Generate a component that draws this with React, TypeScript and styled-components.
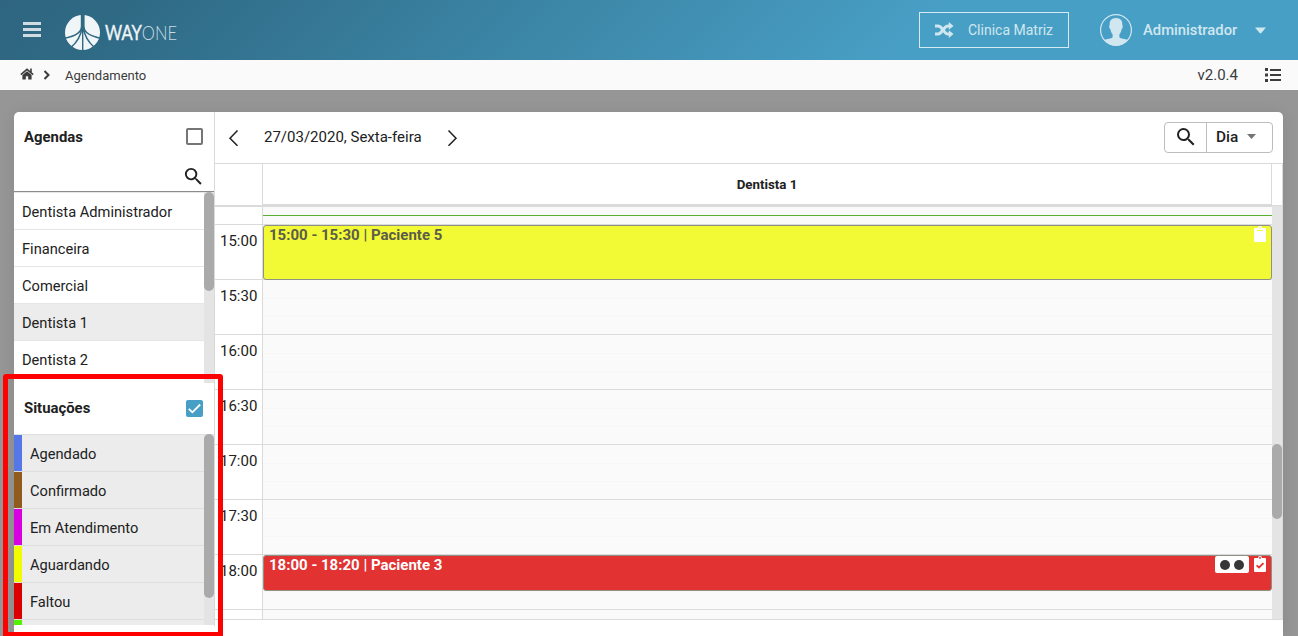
import React from "react";
import styled, { createGlobalStyle } from "styled-components";
import { MdSearch } from "react-icons/md";

const GlobalStyle = createGlobalStyle`
  *, *::before, *::after { box-sizing: border-box; }
  body {
    margin: 0;
    height: 636px;
    overflow: hidden;
    background: #969696;
    color: #212121;
    font: 15px/20px Roboto, sans-serif;
  }
  svg { display: block; flex: none; }
`;

const Page = styled.div`
  position: relative;
  height: 636px;
  overflow: hidden;
  display: flex;
  flex-direction: column;
`;

const TopBar = styled.header`
  flex: none;
  height: 60px;
  display: flex;
  align-items: center;
  padding: 0 32px 0 23px;
  color: #d0e7f0;
  background: linear-gradient(135deg, #2f6580 0%, #2f6a85 10%, #489fc5 70%, #489fc5 100%);
`;

const Menu = styled.button`
  width: 18px;
  height: 15px;
  margin-bottom: 1px;
  padding: 0;
  border: 0;
  background: none;
  display: flex;
  flex-direction: column;
  justify-content: space-between;
`;

const MenuLine = styled.span`
  height: 3px;
  background: #cfdde3;
`;

const Logo = styled.div`
  display: flex;
  align-items: center;
  margin-left: 24px;
  padding-top: 5px;
  flex: 1;
`;

const ClinicButton = styled.button`
  width: 150px;
  height: 36px;
  padding: 0 15px;
  display: flex;
  align-items: center;
  gap: 14px;
  border: 1px solid #d5eaf2;
  background: none;
  color: inherit;
  font: 14px/20px Roboto, sans-serif;
  white-space: nowrap;
`;

const User = styled.div`
  display: flex;
  align-items: center;
  margin-left: 31px;
  font-weight: 500;
  font-size: 14.8px;
`;

const UserName = styled.span`
  width: 112px;
  margin-left: 11px;
`;

const Crumbs = styled.nav`
  flex: none;
  height: 30px;
  display: flex;
  align-items: center;
  padding: 0 17px 0 20px;
  background: #fafafa;
  color: #3c3c3c;
  font-size: 13px;
`;

const CrumbText = styled.span`
  flex: 1;
  margin-left: 14px;
  padding-top: 2px;
`;

const Version = styled.span`
  margin-right: 27px;
  font-size: 15px;
`;

const Card = styled.main`
  flex: 1;
  min-height: 0;
  display: flex;
  margin: 22px 15px 0 14px;
  background: #fff;
  border-radius: 5px 5px 0 0;
  box-shadow: 0 2px 16px rgba(0, 0, 0, 0.09);
`;

const Sidebar = styled.aside`
  width: 201px;
  height: 514px;
  flex: none;
  border-right: 1px solid #dadada;
  display: flex;
  flex-direction: column;
`;

const GroupHeader = styled.div<{ $height: number }>`
  flex: none;
  height: ${(p) => p.$height}px;
  display: flex;
  align-items: center;
  justify-content: space-between;
  padding: 0 11.5px 1px 10px;
  font-weight: 700;
  font-size: 14.9px;
`;

const Checkbox = styled.span<{ $checked?: boolean }>`
  width: 17px;
  height: 17px;
  border: ${(p) => (p.$checked ? "0" : "2px solid #757575")};
  border-radius: 2px;
  background: ${(p) => (p.$checked ? "#479fc5" : "#fff")};
  color: #fff;
`;

const SearchRow = styled.div`
  flex: none;
  height: 30px;
  display: flex;
  justify-content: flex-end;
  padding: 3px 9px 0 0;
  border-bottom: 1px solid #8c8c8c;
`;

const ScrollList = styled.div<{ $height: number }>`
  flex: none;
  height: ${(p) => p.$height}px;
  display: flex;
  overflow: hidden;
`;

const Rows = styled.div`
  flex: 1;
`;

const Row = styled.div<{ $selected?: boolean; $color?: string }>`
  height: 37px;
  display: flex;
  align-items: center;
  padding: 2px 0 0 8px;
  border-top: 1px solid ${(p) => (p.$color ? "#dedede" : "#e6e6e6")};
  background: ${(p) =>
    p.$color
      ? `linear-gradient(to right, ${p.$color} 8px, #ececec 8px)`
      : p.$selected
        ? "#ececec"
        : "#fff"};
  text-indent: ${(p) => (p.$color ? "8px" : "0")};
  font-size: 14.65px;
`;

const Track = styled.div<{ $offset?: number }>`
  width: 10px;
  flex: none;
  padding-top: ${(p) => p.$offset ?? 0}px;
  background: #e4e4e4;
`;

const Thumb = styled.div<{ $height: number }>`
  height: ${(p) => p.$height}px;
  border-radius: 5px;
  background: #aaa;
`;

const Calendar = styled.section`
  flex: 1;
  min-width: 0;
  height: 508px;
  display: flex;
  flex-direction: column;
  border-bottom: 1px solid #dadada;
`;

const Toolbar = styled.div`
  flex: none;
  height: 52px;
  display: flex;
  align-items: center;
  padding: 0 10px 1px 13px;
  border-bottom: 1px solid #dadada;
`;

const DateLabel = styled.span`
  width: 158px;
  margin: 0 25px;
  padding-bottom: 1px;
  white-space: nowrap;
  font-size: 15px;
`;

const ButtonGroup = styled.div`
  margin-left: auto;
  width: 109px;
  height: 31px;
  display: flex;
  border: 1px solid #bdbdbd;
  border-radius: 4px;
`;

const GroupButton = styled.button<{ $width: number }>`
  width: ${(p) => p.$width}px;
  padding: 0 0 0 8.5px;
  display: flex;
  align-items: center;
  gap: 9px;
  border: 0;
  background: none;
  color: #212121;
  font: 500 15.4px/20px Roboto, sans-serif;

  & + & {
    padding: 0 0 1px 9px;
    border-left: 1px solid #bdbdbd;
  }
`;

const ColumnHeader = styled.div`
  flex: none;
  height: 42px;
  display: flex;
  border-right: 1px solid #dadada;
`;

const HeaderCell = styled.div<{ $width?: number }>`
  ${(p) => (p.$width ? `width: ${p.$width}px; flex: none;` : "flex: 1;")}
  border-right: 1px solid #dadada;
  border-bottom: 2px solid #dadada;
  display: flex;
  align-items: center;
  justify-content: center;
  padding-top: 1px;
  font-size: 13.3px;
  font-weight: 700;

  &:first-child { border-bottom: 1px solid #dadada; }
  &:last-child { border-right: 0; border-bottom: 1px solid #dadada; }
`;

const Grid = styled.div`
  flex: 1;
  min-height: 0;
  display: flex;
  overflow: hidden;
  border-right: 1px solid #dadada;
`;

const Times = styled.div`
  width: 48px;
  flex: none;
  border-right: 1px solid #dadada;
`;

const TimeCell = styled.div<{ $first?: boolean }>`
  height: ${(p) => (p.$first ? 18 : 55)}px;
  border-top: 1px solid #dadada;
  padding: 6px 0 0 5px;
  font-size: 15px;
`;

const DayColumn = styled.div`
  position: relative;
  flex: 1;
`;

const Slot = styled.div<{ $first?: boolean }>`
  height: ${(p) => (p.$first ? 18 : 55)}px;
  border-top: 1px solid #dadada;
  background: ${(p) =>
    p.$first
      ? "#fafafa"
      : "linear-gradient(#fafafa 18px, #f7f7f7 18px 19px, #fafafa 19px 36px, #f7f7f7 36px 37px, #fafafa 37px)"};
`;

const NowLine = styled.div`
  position: absolute;
  top: 9px;
  left: 0;
  right: 0;
  height: 1px;
  background: #58ae31;
`;

const Appointment = styled.article<{ $top: number; $height: number; $bg: string; $fg: string }>`
  position: absolute;
  top: ${(p) => p.$top}px;
  left: 0;
  right: 0;
  height: ${(p) => p.$height}px;
  display: flex;
  align-items: flex-start;
  justify-content: space-between;
  padding: 0 5px;
  border: 1px solid #909083;
  border-radius: 3px;
  background: ${(p) => p.$bg};
  color: ${(p) => p.$fg};
  font-weight: 700;
  font-size: 15px;
  line-height: 18px;
`;

const Badges = styled.span`
  display: flex;
  gap: 5px;
`;

const DotBadge = styled.span`
  width: 34px;
  height: 17px;
  display: flex;
  align-items: center;
  justify-content: center;
  gap: 4px;
  border-radius: 2px;
  background: #fff;
`;

const Dot = styled.span`
  width: 10px;
  height: 10px;
  border-radius: 50%;
  background: #363636;
`;

const Highlight = styled.div`
  position: absolute;
  left: 3px;
  top: 374px;
  width: 220px;
  height: 262px;
  border: 5px solid #f00;
  border-bottom-width: 4px;
  border-radius: 3px 3px 0 0;
`;

const agendas = ["Dentista Administrador", "Financeira", "Comercial", "Dentista 1", "Dentista 2", ""];

const statuses = [
  { label: "Agendado", color: "#5677e8" },
  { label: "Confirmado", color: "#915b1d" },
  { label: "Em Atendimento", color: "#d800e0" },
  { label: "Aguardando", color: "#f2fc00" },
  { label: "Faltou", color: "#dc0000" },
  { label: "", color: "#55ef00" },
];

const times = ["15:00", "15:30", "16:00", "16:30", "17:00", "17:30", "18:00", ""];

const LogoMark = () => (
  <svg width="136" height="36" viewBox="0 0 136 36">
    <defs>
      <mask id="roads">
        <circle cx="17.5" cy="17.5" r="17.5" fill="#fff" />
        <path d="M15.8 -1H19.6V13L18.6 17H16.8L15.8 13Z" fill="#000" />
        <g fill="none" stroke="#000" strokeWidth="1.6">
          <path d="M16.6 12Q16 20 -1 23.5" />
          <path d="M18.8 12Q19.4 20 36.4 23.5" />
          <path d="M17 13Q15.5 24 6 32.5" />
          <path d="M18.4 13Q19.9 24 29.4 32.5" />
          <path d="M17.7 12V36" strokeWidth="1.4" />
        </g>
      </mask>
    </defs>
    <rect width="35" height="35" fill="#f0f5f8" mask="url(#roads)" />
    <text x="40" y="25" fontFamily="Lato, sans-serif" fontSize="20.5" textLength="72" lengthAdjust="spacingAndGlyphs">
      <tspan fill="#f0f5f8" stroke="#f0f5f8" strokeWidth=".4">WAY</tspan>
      <tspan fill="#c8dde5" fontWeight="300">ONE</tspan>
    </text>
  </svg>
);

const Avatar = () => (
  <svg width="32" height="32" viewBox="0 0 32 32">
    <defs>
      <clipPath id="avatar">
        <circle cx="16" cy="16" r="15.5" />
      </clipPath>
    </defs>
    <g clipPath="url(#avatar)" fill="#d0e7f0">
      <path d="M16 4C20.8 4 22.6 7 22.3 11C23.2 11.2 22.6 15 21.6 15.3C21.2 17.7 20.4 19.4 19.4 20.3V23.2C20.5 25.2 28 24.6 31 28V32H1V28C4 24.6 11.5 25.2 12.6 23.2V20.3C11.6 19.4 10.8 17.7 10.4 15.3C9.4 15 8.8 11.2 9.7 11C9.4 7 11.2 4 16 4Z" />
    </g>
    <circle cx="16" cy="16" r="15.4" fill="none" stroke="#d0e7f0" strokeWidth="1.2" />
  </svg>
);

const ShuffleIcon = () => (
  <svg width="19" height="16" viewBox="0 0 19 16" fill="none" stroke="currentColor" strokeWidth="3">
    <path d="M0 3.9H3.2Q4.6 3.9 5.6 5L10.2 10.6Q11.4 12 13 12H14.5" />
    <path d="M0 12H3.2Q4.6 12 5.6 10.8L10.2 5.2Q11.4 3.9 13 3.9H14.5" />
    <path d="M13.8 0L18.5 3.9L13.8 7.7ZM13.8 8.2L18.5 12.1L13.8 16Z" fill="currentColor" stroke="none" />
  </svg>
);

const HomeIcon = () => (
  <svg width="14" height="12" viewBox="0 0 14 12">
    <path d="M.8 6.6L7 1.4L13.2 6.6M11 .6V4" fill="none" stroke="#3c3c3c" strokeWidth="1.6" />
    <path d="M2.4 7L7 3.3L11.6 7V11.5H8.2V8.2H5.8V11.5H2.4Z" fill="#3c3c3c" />
  </svg>
);

const CrumbIcons = styled.span`
  display: flex;
  align-items: center;
  padding-bottom: 2px;
`;

const Chevron = ({ flip }: { flip?: boolean }) => (
  <svg width="11" height="18" viewBox="0 0 11 18" fill="none" stroke="#212121" strokeWidth="1.5">
    <path d={flip ? "M1.5 2.5L9 10.2L1.5 17.8" : "M9.5 2.5L2 10.2L9.5 17.8"} />
  </svg>
);

const ListIcon = () => (
  <svg width="16" height="14" viewBox="0 0 16 14" fill="#3c3c3c">
    <path d="M0 0H3V3H0ZM0 5.5H3V8.5H0ZM0 11H3V14H0ZM5 1H16V3H5ZM5 6H16V8H5ZM5 11H16V13H5Z" />
  </svg>
);

const Clipboard = ({ checked }: { checked?: boolean }) => (
  <svg width="12" height="17" viewBox="0 0 12 17">
    <path d="M1 2H4A2 2 0 0 1 8 2H11Q12 2 12 3V15Q12 16 11 16H1Q0 16 0 15V3Q0 2 1 2Z" fill="#fff" />
    {checked ? (
      <path d="M2.6 9.3L5 11.5L9.5 7.2M5.2 1.8H6.8" fill="none" stroke="#e23232" strokeWidth="1.8" />
    ) : (
      <path d="M3 4.5H9M5.2 2H6.8" fill="none" stroke="#f1fa34" strokeWidth="1" />
    )}
  </svg>
);

export default function App() {
  return (
    <Page>
      <GlobalStyle />
      <TopBar>
        <Menu aria-label="Menu">
          <MenuLine />
          <MenuLine />
          <MenuLine />
        </Menu>
        <Logo>
          <LogoMark />
        </Logo>
        <ClinicButton>
          <ShuffleIcon />
          Clinica Matriz
        </ClinicButton>
        <User>
          <Avatar />
          <UserName>Administrador</UserName>
          <svg width="11" height="7" viewBox="0 0 11 7" fill="currentColor">
            <path d="M0 .5H11L6.3 6Q5.5 6.8 4.7 6Z" />
          </svg>
        </User>
      </TopBar>
      <Crumbs>
        <CrumbIcons>
          <HomeIcon />
          <svg width="17" height="11" viewBox="1 0 17 11" fill="none" stroke="#3c3c3c" strokeWidth="2">
            <path d="M11.5 2L15.5 6L11.5 10" />
          </svg>
        </CrumbIcons>
        <CrumbText>Agendamento</CrumbText>
        <Version>v2.0.4</Version>
        <ListIcon />
      </Crumbs>
      <Card>
        <Sidebar>
          <GroupHeader $height={50}>
            Agendas
            <Checkbox />
          </GroupHeader>
          <SearchRow>
            <MdSearch size={23} />
          </SearchRow>
          <ScrollList $height={191}>
            <Rows>
              {agendas.map((name) => (
                <Row key={name} $selected={name === "Dentista 1"}>
                  {name}
                </Row>
              ))}
            </Rows>
            <Track>
              <Thumb $height={99} />
            </Track>
          </ScrollList>
          <GroupHeader $height={51}>
            Situações
            <Checkbox $checked>
              <svg width="17" height="17" viewBox="0 0 17 17" fill="none" stroke="currentColor" strokeWidth="1.8">
                <path d="M2.8 8.8L6.4 12.3L14.2 4.5" />
              </svg>
            </Checkbox>
          </GroupHeader>
          <ScrollList $height={191}>
            <Rows>
              {statuses.map((s) => (
                <Row key={s.color} $color={s.color}>
                  {s.label}
                </Row>
              ))}
            </Rows>
            <Track>
              <Thumb $height={164} />
            </Track>
          </ScrollList>
        </Sidebar>
        <Calendar>
          <Toolbar>
            <Chevron />
            <DateLabel>27/03/2020, Sexta-feira</DateLabel>
            <Chevron flip />
            <ButtonGroup>
              <GroupButton $width={41} aria-label="Buscar">
                <MdSearch size={24} />
              </GroupButton>
              <GroupButton $width={66}>
                Dia
                <svg width="9" height="5" viewBox="0 0 9 5" fill="#757575">
                  <path d="M0 0H9L4.5 5Z" />
                </svg>
              </GroupButton>
            </ButtonGroup>
          </Toolbar>
          <ColumnHeader>
            <HeaderCell $width={48} />
            <HeaderCell>Dentista 1</HeaderCell>
            <HeaderCell $width={10} />
          </ColumnHeader>
          <Grid>
            <Times>
              <TimeCell $first />
              {times.map((t) => (
                <TimeCell key={t}>{t}</TimeCell>
              ))}
            </Times>
            <DayColumn>
              <Slot $first />
              {times.map((t) => (
                <Slot key={t} />
              ))}
              <NowLine />
              <Appointment $top={19} $height={55} $bg="#f1fa34" $fg="#5c5c4c">
                15:00 - 15:30 | Paciente 5
                <Badges>
                  <Clipboard />
                </Badges>
              </Appointment>
              <Appointment $top={349} $height={36} $bg="#e23232" $fg="#fff">
                18:00 - 18:20 | Paciente 3
                <Badges>
                  <DotBadge>
                    <Dot />
                    <Dot />
                  </DotBadge>
                  <Clipboard checked />
                </Badges>
              </Appointment>
            </DayColumn>
            <Track $offset={238}>
              <Thumb $height={75} />
            </Track>
          </Grid>
        </Calendar>
      </Card>
      <Highlight />
    </Page>
  );
}
